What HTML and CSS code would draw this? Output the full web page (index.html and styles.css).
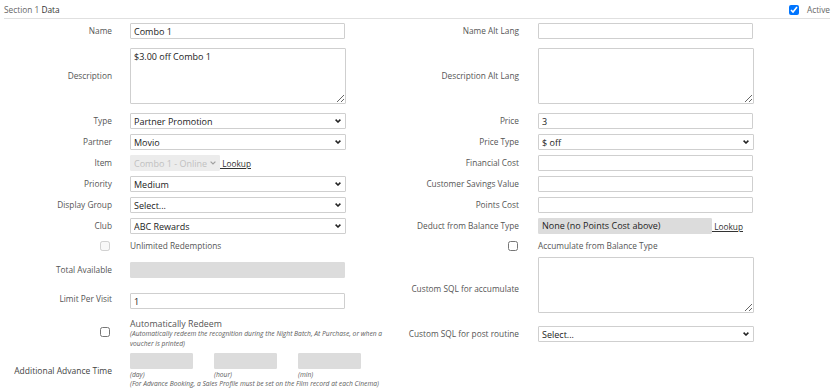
FILE: index.html
```html
<!DOCTYPE html>
<html lang="en">
<head>
  <meta charset="UTF-8" />
  <title>Recognition - Section 1 Data</title>
  <link rel="stylesheet" href="styles.css">
</head>
<body>
  <div class="section-head">
    <div class="section-title">Section 1 <b>Data</b></div>
    <label class="active-toggle"><input type="checkbox" checked> Active</label>
  </div>

  <div class="columns">
    <!-- left column -->
    <div class="col col-left">
      <div class="lbl">Name</div>
      <div><input class="txt" type="text" value="Combo 1"></div>

      <div class="lbl">Description</div>
      <div><textarea class="area">$3.00 off Combo 1</textarea></div>

      <div class="lbl">Type</div>
      <div class="sel"><select><option>Partner Promotion</option></select><svg class="chev" width="6" height="4" viewBox="0 0 6 4"><path d="M0.6 0.6 L3 3 L5.4 0.6"/></svg></div>

      <div class="lbl">Partner</div>
      <div class="sel"><select><option>Movio</option></select><svg class="chev" width="6" height="4" viewBox="0 0 6 4"><path d="M0.6 0.6 L3 3 L5.4 0.6"/></svg></div>

      <div class="lbl">Item</div>
      <div class="inline">
        <div class="sel sel-off"><select disabled><option>Combo 1 - Online</option></select><svg class="chev" width="6" height="4" viewBox="0 0 6 4"><path d="M0.6 0.6 L3 3 L5.4 0.6"/></svg></div>
        <a class="lookup" href="#">&nbsp;Lookup</a>
      </div>

      <div class="lbl">Priority</div>
      <div class="sel"><select><option>Medium</option></select><svg class="chev" width="6" height="4" viewBox="0 0 6 4"><path d="M0.6 0.6 L3 3 L5.4 0.6"/></svg></div>

      <div class="lbl">Display Group</div>
      <div class="sel"><select><option>Select...</option></select><svg class="chev" width="6" height="4" viewBox="0 0 6 4"><path d="M0.6 0.6 L3 3 L5.4 0.6"/></svg></div>

      <div class="lbl">Club</div>
      <div class="sel"><select><option>ABC Rewards</option></select><svg class="chev" width="6" height="4" viewBox="0 0 6 4"><path d="M0.6 0.6 L3 3 L5.4 0.6"/></svg></div>

      <div class="lbl"><input class="chk" type="checkbox" disabled></div>
      <div class="check-text">Unlimited Redemptions</div>

      <div class="lbl">Total Available</div>
      <div><div class="box grey total"></div></div>

      <div class="lbl">Limit Per Visit</div>
      <div><input class="txt limit" type="text" value="1"></div>

      <div class="lbl"><input class="chk" type="checkbox"></div>
      <div class="redeem">
        <div class="redeem-title">Automatically Redeem</div>
        <div class="note">(Automatically redeem the recognition during the Night Batch, At Purchase, or when a<br>voucher is printed)</div>
      </div>

      <div class="lbl lbl-dark">Additional Advance Time</div>
      <div class="advance">
        <div class="adv-boxes">
          <div class="adv"><div class="box grey"></div><div class="note">(day)</div></div>
          <div class="adv"><div class="box grey"></div><div class="note">(hour)</div></div>
          <div class="adv"><div class="box grey"></div><div class="note">(min)</div></div>
        </div>
        <div class="note">(For Advance Booking, a Sales Profile must be set on the Film record at each Cinema)</div>
      </div>
    </div>

    <!-- right column -->
    <div class="col col-right">
      <div class="lbl">Name Alt Lang</div>
      <div><input class="txt" type="text"></div>

      <div class="lbl">Description Alt Lang</div>
      <div><textarea class="area"></textarea></div>

      <div class="lbl">Price</div>
      <div><input class="txt" type="text" value="3"></div>

      <div class="lbl">Price Type</div>
      <div class="sel"><select><option>$ off</option></select><svg class="chev" width="6" height="4" viewBox="0 0 6 4"><path d="M0.6 0.6 L3 3 L5.4 0.6"/></svg></div>

      <div class="lbl">Financial Cost</div>
      <div><input class="txt" type="text"></div>

      <div class="lbl">Customer Savings Value</div>
      <div><input class="txt" type="text"></div>

      <div class="lbl">Points Cost</div>
      <div><input class="txt" type="text"></div>

      <div class="lbl">Deduct from Balance Type</div>
      <div class="inline">
        <div class="box grey deduct">None (no Points Cost above)</div>
        <a class="lookup" href="#">&nbsp;Lookup</a>
      </div>

      <div class="lbl"><input class="chk" type="checkbox"></div>
      <div class="check-text">Accumulate from Balance Type</div>

      <div class="lbl">Custom SQL for accumulate</div>
      <div><textarea class="area sql"></textarea></div>

      <div class="lbl">Custom SQL for post routine</div>
      <div class="sel"><select><option>Select...</option></select><svg class="chev" width="6" height="4" viewBox="0 0 6 4"><path d="M0.6 0.6 L3 3 L5.4 0.6"/></svg></div>
    </div>
  </div>
</body>
</html>
```

FILE: styles.css
```css
* {
  box-sizing: border-box;
}
html, body {
  overflow: hidden;
}
body {
  margin: 0;
  width: 840px;
  font-family: "Open Sans", sans-serif;
  font-size: 8.3px;
  color: #555;
  background: #fff;
}
.section-head {
  display: flex;
  justify-content: space-between;
  align-items: center;
  margin: 0 10px 0 4px;
  padding: 4px 0 2px 0;
  line-height: 12px;
  border-bottom: 1px solid #e0e0e0;
}
.section-title {
  color: #666;
}
.section-title b {
  color: #333;
  font-weight: 500;
}
.active-toggle {
  display: flex;
  align-items: center;
  gap: 8px;
  color: #666;
  font-size: 8.3px;
}
.active-toggle input {
  width: 10px;
  height: 10px;
  margin: 0;
}
.columns {
  display: flex;
  align-items: flex-start;
  padding-top: 4px;
}
.col {
  display: grid;
  align-items: center;
  align-content: start;
  row-gap: 5px;
}
.col-left {
  width: 398px;
  grid-template-columns: 112px 268px;
  column-gap: 18px;
}
.col-right {
  grid-template-columns: 121px 216px;
  column-gap: 19px;
}
.lbl {
  text-align: right;
  line-height: 12px;
  white-space: nowrap;
}
.lbl-dark {
  color: #444;
  font-size: 8.5px;
}
.txt, .area, select, .box {
  display: block;
  font-family: "Open Sans", sans-serif;
  font-size: 9px;
  color: #222;
  border: 1px solid #cfcfcf;
  border-radius: 1px;
  background: #fff;
  outline: none;
}
.txt {
  width: 215px;
  height: 16px;
  padding: 0 3px;
}
.area {
  width: 216px;
  height: 56px;
  margin: 4px 0;
  padding: 2px 3px;
  line-height: 12px;
}
.area.sql {
  margin: 0 0 8px;
}
.sel {
  position: relative;
  width: 216px;
}
select {
  appearance: none;
  width: 100%;
  height: 16px;
  padding: 0 14px 0 3px;
}
.chev {
  position: absolute;
  right: 5px;
  top: 6px;
  fill: none;
  stroke: #222;
  stroke-width: 1.5;
}
.sel-off {
  width: 90px;
}
.sel-off select {
  padding-right: 8px;
  background: #e4e4e4;
  border-color: #e4e4e4;
  color: #a6a6a6;
}
.sel-off .chev {
  right: 4px;
  stroke: #a0a0a0;
  stroke-width: 1.2;
}
.inline {
  display: flex;
  align-items: center;
}
.lookup {
  color: #333;
  font-size: 8.3px;
  text-decoration: underline;
}
.box {
  height: 16px;
}
.grey {
  background: #dcdcdc;
  border-color: #dcdcdc;
}
.total {
  width: 215px;
  margin: 5px 0;
}
.deduct {
  width: 174px;
  padding: 0 3px;
  line-height: 14px;
}
.limit {
  margin-top: 5px;
}
.chk {
  width: 10px;
  height: 10px;
  margin: 0 2px 0 0;
  vertical-align: middle;
}
.col-right .chk {
  margin-right: 1px;
}
.check-text {
  line-height: 13px;
}
.redeem {
  margin-top: 5px;
}
.redeem-title {
  font-size: 8.8px;
  line-height: 10px;
}
.note {
  font-size: 6.7px;
  font-style: italic;
  line-height: 9.5px;
  color: #5c5c5c;
  white-space: nowrap;
}
.adv-boxes {
  display: flex;
  gap: 21px;
}
.adv {
  width: 63px;
}
.adv .note {
  margin-top: 1px;
  line-height: 10px;
}
.advance > .note {
  line-height: 8px;
}
```
